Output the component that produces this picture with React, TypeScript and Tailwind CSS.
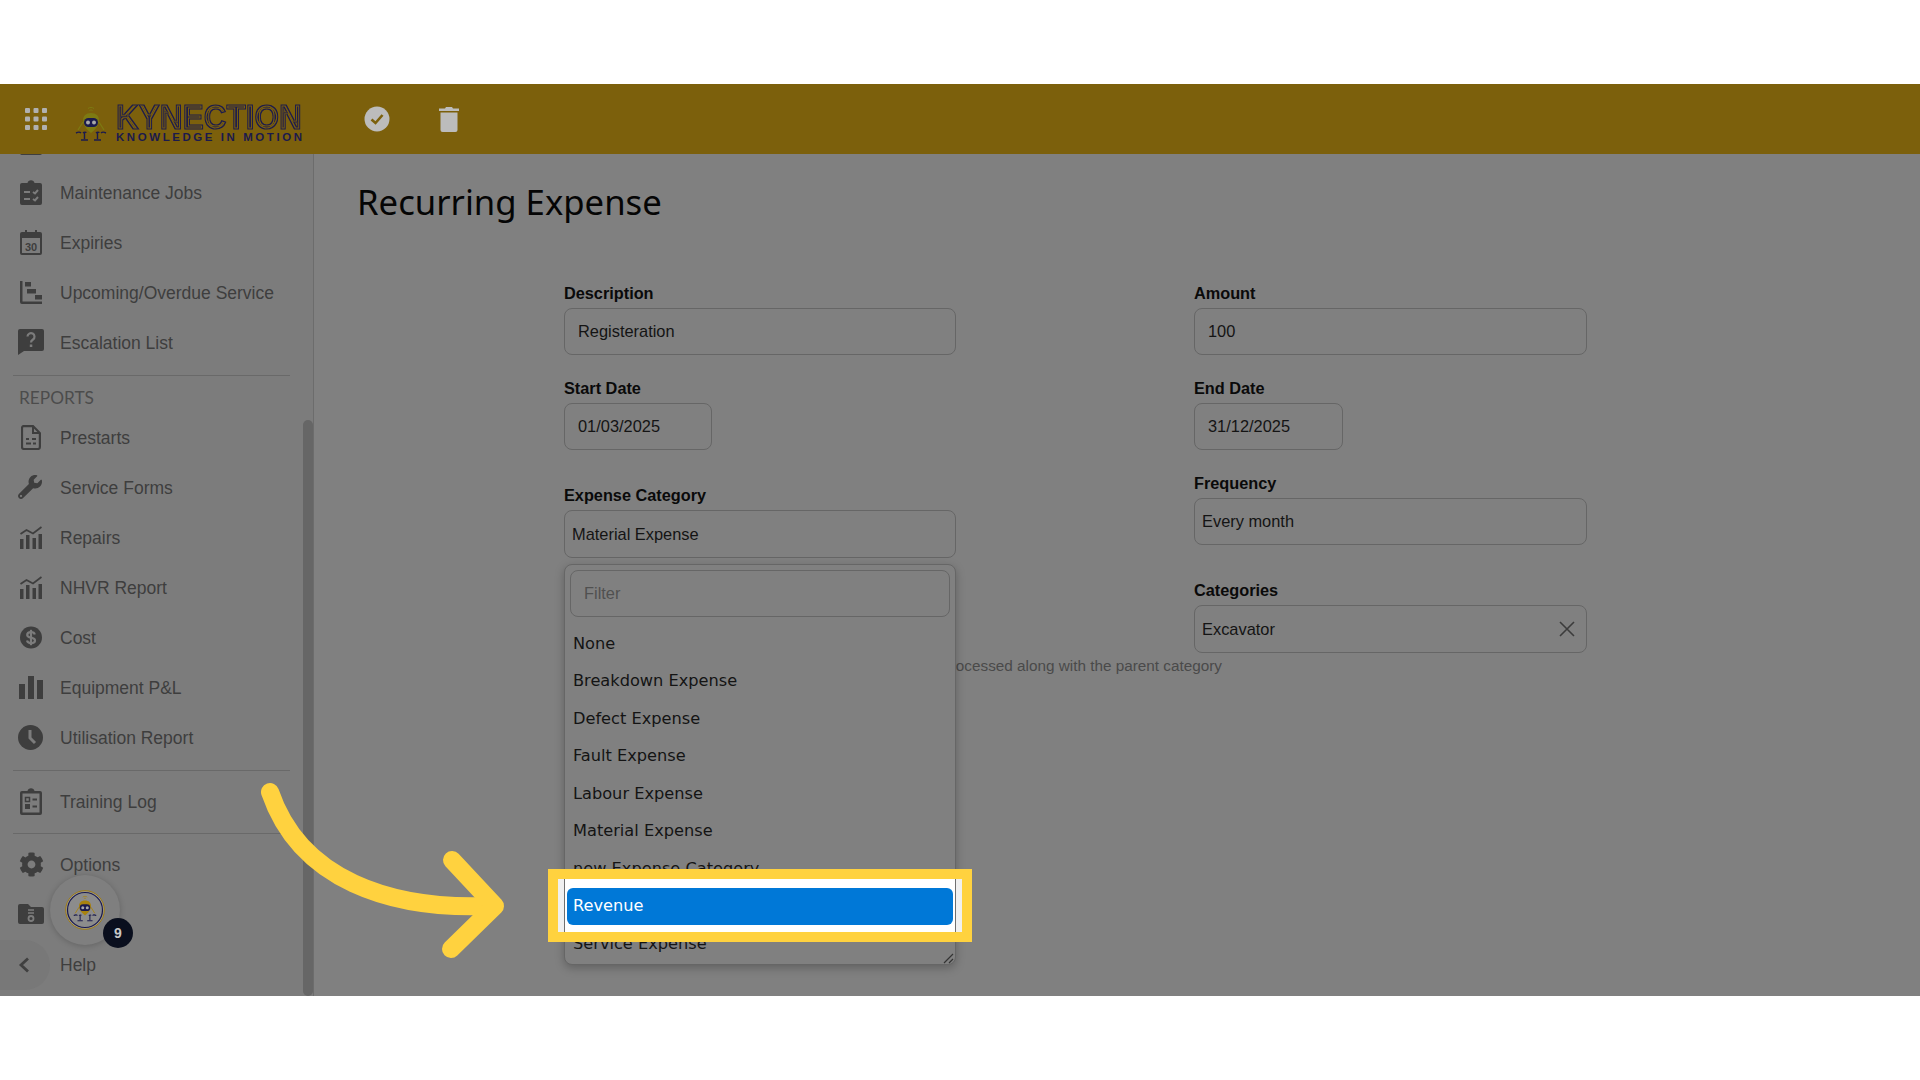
import type { ReactNode } from "react";
import { FaCog, FaWrench } from "react-icons/fa";

const ink = "#3e3e3e";
const side = "#7c7c7c";

function Svg({ children, w = 22, h = 24 }: { children: ReactNode; w?: number; h?: number }) {
  return (
    <svg width={w} height={h} viewBox={`0 0 ${w} ${h}`} className="shrink-0">
      {children}
    </svg>
  );
}

const ClipboardIcon = () => (
  <Svg h={25}>
    <path fill={ink} d="M2 3h5.500a3.600 3.600 0 0 1 7 0H20a2 2 0 0 1 2 2v18a2 2 0 0 1-2 2H2a2 2 0 0 1-2-2V5a2 2 0 0 1 2-2z" />
    <path fill="none" stroke={side} strokeWidth="2" d="M4 12h6M4 19h6M13 12l2 1.500 3-3.500M13 19l2 1.500 3-3.500" />
  </Svg>
);

const CalendarIcon = () => (
  <Svg h={25}>
    <path fill={ink} d="M2 2h3V0h2v2h8V0h2v2h3a2 2 0 0 1 2 2v19a2 2 0 0 1-2 2H2a2 2 0 0 1-2-2V4a2 2 0 0 1 2-2z" />
    <rect x="2" y="8" width="18" height="15" fill={side} />
    <text x="11" y="21" textAnchor="middle" fontSize="11" fontWeight="700" fontFamily="Liberation Sans" fill={ink}>30</text>
  </Svg>
);

const GanttIcon = () => (
  <Svg h={23}>
    <path fill={ink} d="M0 0h2.500v20.500H22V23H2a2 2 0 0 1-2-2z" />
    <rect x="5" y="1" width="6" height="4.500" fill={ink} />
    <rect x="7" y="8" width="9" height="4.500" fill={ink} />
    <rect x="15" y="14" width="7" height="4.500" fill={ink} />
  </Svg>
);

const QuestionIcon = () => (
  <Svg w={26} h={26}>
    <path fill={ink} d="M2 0h22a2 2 0 0 1 2 2v18a2 2 0 0 1-2 2H6l-6 4V2a2 2 0 0 1 2-2z" />
    <path fill="none" stroke={side} strokeWidth="2.200" d="M9.500 7.500a3.500 3.500 0 1 1 5.500 3c-1.300.9-2 1.500-2 3" />
    <rect x="11.800" y="15.500" width="2.500" height="2.500" fill={side} />
  </Svg>
);

const DocIcon = () => (
  <Svg w={20} h={25}>
    <path fill="none" stroke={ink} strokeWidth="2.200" d="M3 1.100h9l6.900 7V22a2 2 0 0 1-2 2H3a2 2 0 0 1-2-2V3a2 2 0 0 1 2-2z" />
    <path fill={ink} d="M11 1h2v6h6v2h-8z" />
    <path fill="none" stroke={ink} strokeWidth="2" d="M5 14h3M11 14h4M5 18.500h5M12 18.500h3" />
  </Svg>
);

const TrendIcon = () => (
  <Svg h={23}>
    <path fill={ink} d="M0 13h3.500v10H0zM6 9h3.500v14H6zM12.500 12H16v11h-3.500zM18.500 8H22v15h-3.500z" />
    <path fill="none" stroke={ink} strokeWidth="1.800" d="M0.500 8l6-4 6.500 3.500L21.500 1" />
  </Svg>
);

const DollarIcon = () => (
  <Svg h={23}>
    <circle cx="11" cy="11.500" r="11" fill={ink} />
    <path fill="none" stroke={side} strokeWidth="2.200" d="M14.800 8.500c-.4-1.500-1.900-2.300-3.800-2.300-2.200 0-3.800 1-3.800 2.700 0 3.700 7.800 1.800 7.800 5.500 0 1.700-1.700 2.700-4 2.700-2 0-3.600-.9-4-2.500" />
    <path stroke={side} strokeWidth="2.200" d="M11 3.800v15.400" />
  </Svg>
);

const BarsIcon = () => (
  <Svg w={24} h={23}>
    <path fill={ink} d="M0 8h6v15H0zM9 0h6v23H9zM18 4h6v19h-6z" />
  </Svg>
);

const ClockIcon = () => (
  <Svg w={25} h={25}>
    <circle cx="12.500" cy="12.500" r="12.500" fill={ink} />
    <path fill="none" stroke={side} strokeWidth="3" d="M12 5v8l5 5" />
  </Svg>
);

const TrainingIcon = () => (
  <Svg h={27}>
    <path fill={ink} d="M2 3h5.500a3.600 3.600 0 0 1 7 0H20a2 2 0 0 1 2 2v20a2 2 0 0 1-2 2H2a2 2 0 0 1-2-2V5a2 2 0 0 1 2-2z" />
    <rect x="2.500" y="5.500" width="17" height="19" fill={side} />
    <rect x="5.500" y="9.500" width="4" height="4" fill="none" stroke={ink} strokeWidth="1.500" />
    <rect x="5" y="16" width="5" height="5" fill={ink} />
    <path stroke={ink} strokeWidth="2" d="M12.500 11.500H17M12.500 18.500H17" />
  </Svg>
);

const FolderIcon = () => (
  <Svg w={26} h={20}>
    <path fill={ink} d="M2 0h8l3 3h11a2 2 0 0 1 2 2v13a2 2 0 0 1-2 2H2a2 2 0 0 1-2-2V2a2 2 0 0 1 2-2z" />
    <path stroke={side} strokeWidth="1.500" d="M10 6h6M10 9h6" />
    <circle cx="13" cy="14.500" r="2.500" fill="none" stroke={side} strokeWidth="1.800" />
  </Svg>
);

const Robot = ({ body, dark }: { body: string; dark: string }) => (
  <>
    <path fill="none" stroke={body} strokeWidth="1" d="M13 5.500c2-1.500 4-1.500 6 0M14.500 7.500c1-.7 2-.7 3 0" />
    <path fill={body} d="M16 10c5 0 8 3 8 7 0 5-4 10-8 13-4-3-8-8-8-13 0-4 3-7 8-7z" />
    <path fill="none" stroke={body} strokeWidth="1.200" d="M8 19l-5 8M24 19l5 8" />
    <rect x="9" y="15" width="14" height="9" rx="4.500" fill={dark} />
    <circle cx="13" cy="19.500" r="2" fill="#a8a8a8" />
    <circle cx="19" cy="19.500" r="2" fill="#a8a8a8" />
    <path fill="none" stroke={dark} strokeWidth="1.400" d="M1 30c2-1 4-1 5 0M8 30c1-1 3-1 3 0M9.500 30v6M6 37h7M19 37h7M22.500 30v6M21 30c1-1 3-1 3 0M26 30c1-1 3-1 5 0" />
  </>
);

// real text; the filter cuts it into the logo's inline stripes
function Logo() {
  return (
    <svg width="230" height="50" viewBox="0 0 230 50" className="shrink-0">
      <defs>
        <filter id="inline-stripes" x="-3%" y="-10%" width="106%" height="120%" colorInterpolationFilters="sRGB">
          <feMorphology in="SourceAlpha" operator="erode" radius="1" result="e1" />
          <feMorphology in="SourceAlpha" operator="erode" radius="2" result="e2" />
          <feMorphology in="SourceAlpha" operator="erode" radius="3" result="e3" />
          <feComposite in="SourceAlpha" in2="e1" operator="out" result="b1" />
          <feComposite in="e2" in2="e3" operator="out" result="b2" />
          <feMerge result="bands">
            <feMergeNode in="b1" />
            <feMergeNode in="b2" />
          </feMerge>
          <feFlood floodColor="#1b1a4d" />
          <feComposite in2="bands" operator="in" />
        </filter>
      </defs>
      <g transform="translate(0 9)">
        <Robot body="#7d7a12" dark="#1b1a4d" />
      </g>
      <text transform="translate(41 35) scale(0.877 1)" fontSize="36" fontWeight="700" fontFamily="Liberation Sans" fill="#1b1a4d" stroke="#1b1a4d" strokeWidth="1.200" filter="url(#inline-stripes)">KYNECTION</text>
      <text x="41" y="47" fontSize="11.500" fontWeight="700" fontFamily="Liberation Sans" fill="#1b1a4d" textLength="186">KNOWLEDGE IN MOTION</text>
    </svg>
  );
}

function Item({ icon, label, offset = 20 }: { icon: ReactNode; label?: string; offset?: number }) {
  return (
    <div className="h-[50px] flex items-center" style={{ paddingLeft: offset }}>
      <div className="w-[40px] shrink-0 -translate-y-px" style={{ marginRight: 20 - offset }}>{icon}</div>
      {label && <span className="text-[17.500px] text-[#3e3e3e] font-['Liberation_Sans',sans-serif]">{label}</span>}
    </div>
  );
}

const Divider = () => <div className="h-px bg-[#696969] ml-[13px] w-[277px]" />;

function Field({ label, value, className = "", inset = "pl-[13px]", boxHeight = "h-[47px]" }: { label: string; value: ReactNode; className?: string; inset?: string; boxHeight?: string }) {
  return (
    <div className={className}>
      <div className="h-[20px] leading-[20px] text-[16.300px] font-bold text-[#0a0a0a]">{label}</div>
      <div className={`mt-[5px] border border-[#666666] rounded-[8px] flex items-center text-[16.400px] text-[#141414] ${boxHeight} ${inset}`}>
        {value}
      </div>
    </div>
  );
}

const options = ["None", "Breakdown Expense", "Defect Expense", "Fault Expense", "Labour Expense", "Material Expense", "new Expense Category"];

function Dropdown() {
  return (
    <div className="absolute left-0 top-[calc(100%+6px)] w-[392px] h-[401px] z-10 border border-[#666666] rounded-[8px] bg-[#808080] shadow-[0_3px_10px_rgba(0,0,0,0.25)]">
      <div className="mx-[5px] mt-[5px] h-[47px] border border-[#666666] rounded-[8px] flex items-center pl-[13px] text-[16.400px] text-[#505050]">
        Filter
      </div>
      <div className="mt-[8px] px-[2px] font-['DejaVu_Sans',sans-serif] text-[16.200px] text-[#141414]">
        {options.map((o) => (
          <div key={o} className="h-[37.500px] flex items-center pl-[6px]">{o}</div>
        ))}
        <div className="h-[37.500px] relative">
          <div className="absolute z-20 left-[-19px] top-[-19px] w-[424px] h-[73px] border-[10px] border-[#ffd23f] bg-[#f0f0f0] flex justify-center">
            <div className="w-[392px] h-full bg-white border-x border-[#707070] pt-[9px] px-[2px]">
              <div className="h-[37px] rounded-[6px] bg-[#0078d7] text-white flex items-center pl-[6px]">Revenue</div>
            </div>
          </div>
        </div>
        <div className="h-[37.500px] flex items-center pl-[6px]">Service Expense</div>
      </div>
      <svg width="12" height="12" viewBox="0 0 12 12" className="absolute right-[1px] bottom-0">
        <path stroke="#333333" strokeWidth="1.200" d="M2 11L11 2M7 11l4-4" />
      </svg>
    </div>
  );
}

function Arrow() {
  return (
    <svg width="260" height="190" viewBox="260 780 260 190" className="absolute z-30 left-[260px] top-[696px]">
      <path fill="none" stroke="#ffd23f" strokeWidth="18" strokeLinecap="round" d="M270 792C300 880 390 910 490 906" />
      <path fill="none" stroke="#ffd23f" strokeWidth="18" strokeLinecap="round" strokeLinejoin="round" d="M452 860L495 906L451 949" />
    </svg>
  );
}

export default function App() {
  return (
    <div className="h-screen overflow-hidden bg-white flex flex-col font-['Liberation_Sans',sans-serif]">
      <div className="h-[84px] shrink-0" />
      <div className="h-[912px] shrink-0 flex flex-col relative bg-[#808080]">
        <header className="h-[70px] shrink-0 z-10 bg-[#7c600c] flex items-center">
          <svg width="22" height="22" viewBox="0 0 22 22" className="ml-[25px] shrink-0">
            <g fill="#b0b0b0">
              {[0, 8.5, 17].map((y) =>
                [0, 8.5, 17].map((x) => <rect key={`${x}-${y}`} x={x} y={y} width="5" height="5" rx="1" />)
              )}
            </g>
          </svg>
          <div className="ml-[28px] flex"><Logo /></div>
          <svg width="26" height="26" viewBox="0 0 26 26" className="ml-[59px] shrink-0">
            <circle cx="13" cy="13" r="12.500" fill="#bcbcbc" />
            <path fill="none" stroke="#7c600c" strokeWidth="2.600" d="M7.500 13.500l4 3.500 7-8" />
          </svg>
          <svg width="20" height="26" viewBox="0 0 20 26" className="ml-[49px] shrink-0">
            <path fill="#bcbcbc" d="M0 2.500h6L7 1h6l1 1.500h6V5H0zM1.500 6.500h17V24a2 2 0 0 1-2 2h-13a2 2 0 0 1-2-2z" />
          </svg>
        </header>

        <div className="flex-1 min-h-0 flex">
          <aside className="w-[314px] shrink-0 flex border-r border-[#6c6c6c] bg-[#7c7c7c] overflow-hidden">
            <div className="w-[303px] shrink-0 -mt-[36px]">
              <Item icon={<ClipboardIcon />} />
              <Item icon={<ClipboardIcon />} label="Maintenance Jobs" />
              <Item icon={<CalendarIcon />} label="Expiries" />
              <Item icon={<GanttIcon />} label="Upcoming/Overdue Service" />
              <Item icon={<QuestionIcon />} label="Escalation List" offset={18} />
              <div className="h-[7px]" />
              <Divider />
              <div className="pl-[19px] h-[30px] mt-[7px] leading-[30px] text-[17.300px] text-[#4c4c4c] font-['Lato',sans-serif]">REPORTS</div>
              <Item icon={<DocIcon />} label="Prestarts" offset={21} />
              <Item icon={<FaWrench size={24} color={ink} />} label="Service Forms" offset={18} />
              <Item icon={<TrendIcon />} label="Repairs" />
              <Item icon={<TrendIcon />} label="NHVR Report" />
              <Item icon={<DollarIcon />} label="Cost" />
              <Item icon={<BarsIcon />} label="Equipment P&L" offset={19} />
              <Item icon={<ClockIcon />} label="Utilisation Report" offset={18} />
              <div className="h-[7px]" />
              <Divider />
              <div className="mt-[6px]" />
              <Item icon={<TrainingIcon />} label="Training Log" />
              <div className="h-[6px]" />
              <Divider />
              <div className="mt-[6px]" />
              <Item icon={<FaCog size={25} color={ink} />} label="Options" offset={19} />
              <Item icon={<FolderIcon />} offset={18} />
              <Item icon={<span />} label="Help" />
            </div>
            <div className="w-[10px] shrink-0 mt-[266px] bg-[#666666] rounded-[5px]" />
          </aside>

          <main className="flex-1 min-w-0 pl-[43px] pt-[24px] text-[#141414]">
            <h1 className="text-[34.700px] leading-[48px] text-[#050505] font-['Noto_Sans',sans-serif]">Recurring Expense</h1>
            <div className="mt-[57px] ml-[207px] flex gap-[238px]">
              <div className="w-[392px] shrink-0">
                <Field label="Description" value="Registeration" />
                <Field label="Start Date" value="01/03/2025" className="mt-[23px] w-[148px]" />
                <div className="relative mt-[35px]">
                  <Field label="Expense Category" value="Material Expense" inset="pl-[7px]" boxHeight="h-[48px]" />
                  <Dropdown />
                </div>
                <div className="mt-[98px] w-[658px] text-right text-[15.300px] leading-[20px] text-[#4a4a4a] whitespace-nowrap">
                  Sub categories are processed along with the parent category
                </div>
              </div>
              <div className="w-[393px] shrink-0">
                <Field label="Amount" value="100" />
                <Field label="End Date" value="31/12/2025" className="mt-[23px] w-[149px]" />
                <Field label="Frequency" value="Every month" className="mt-[23px]" inset="pl-[7px]" />
                <Field label="Categories" value={
                  <div className="flex-1 flex items-center justify-between pr-[11px]">
                    <span>Excavator</span>
                    <svg width="16" height="16" viewBox="0 0 16 16">
                      <path stroke="#3c3c3c" strokeWidth="1.600" d="M1 1l14 14M15 1L1 15" />
                    </svg>
                  </div>
                } className="mt-[35px]" inset="pl-[7px]" boxHeight="h-[48px]" />
              </div>
            </div>
          </main>
        </div>

        {/* floating widget over the sidebar */}
        <div className="absolute z-20 left-[50px] top-[791px] w-[70px] h-[70px] rounded-full bg-[#7f7f7f] shadow-[0_1px_6px_rgba(0,0,0,0.2)] flex items-center justify-center">
          <svg width="40" height="40" viewBox="0 0 40 40">
            <circle cx="20" cy="20" r="19.300" fill="#9a9a9a" stroke="#a07c10" strokeWidth="1" />
            <circle cx="20" cy="20" r="17.500" fill="#8c8c8c" stroke="#1b1a4d" strokeWidth="1.200" />
            <g transform="translate(8 3) scale(0.75)">
              <Robot body="#a8820e" dark="#1b1a4d" />
            </g>
          </svg>
          <div className="absolute left-[53px] top-[43px] w-[30px] h-[30px] rounded-full bg-[#0a0f1e] text-[#c8c8c8] text-[14px] font-bold flex items-center justify-center">9</div>
        </div>
        <div className="absolute z-10 left-0 top-[856px] w-[50px] h-[50px] rounded-r-full bg-[#787878] flex items-center pl-[18px]">
          <svg width="12" height="16" viewBox="0 0 12 16">
            <path fill="none" stroke="#404040" strokeWidth="2.800" d="M10 1.500L3 8l7 6.500" />
          </svg>
        </div>
        <Arrow />
      </div>
    </div>
  );
}
